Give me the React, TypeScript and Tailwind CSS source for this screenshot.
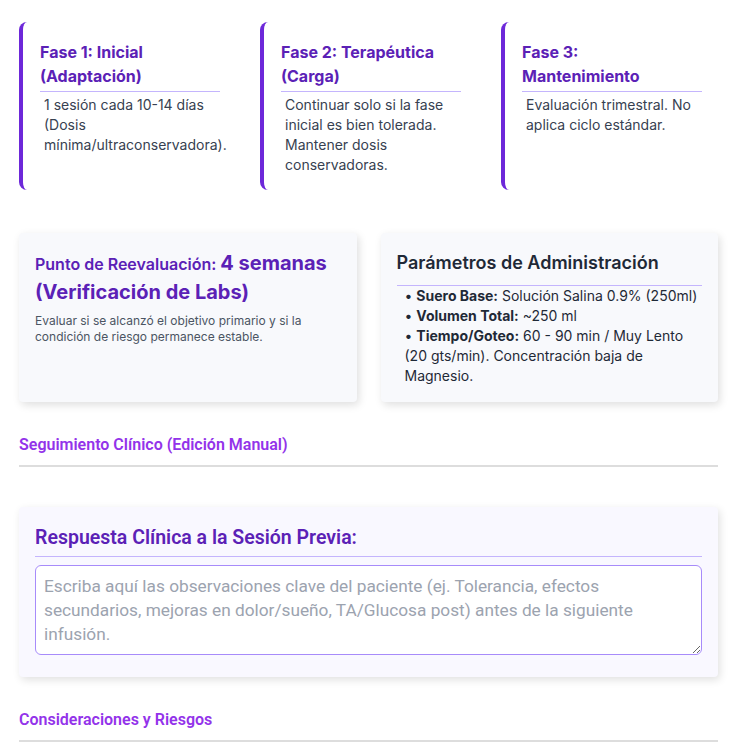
import React from 'react';

const phases: { title: React.ReactNode; body: string }[] = [
  {
    title: 'Fase 1: Inicial (Adaptación)',
    body: '1 sesión cada 10-14 días (Dosis mínima/ultraconservadora).',
  },
  {
    title: 'Fase 2: Terapéutica (Carga)',
    body: 'Continuar solo si la fase inicial es bien tolerada. Mantener dosis conservadoras.',
  },
  {
    title: (
      <>
        Fase 3:
        <br />
        Mantenimiento
      </>
    ),
    body: 'Evaluación trimestral. No aplica ciclo estándar.',
  },
];

const params = [
  { label: 'Suero Base:', value: 'Solución Salina 0.9% (250ml)' },
  { label: 'Volumen Total:', value: '~250 ml' },
  { label: 'Tiempo/Goteo:', value: '60 - 90 min / Muy Lento (20 gts/min). Concentración baja de Magnesio.' },
];

const SectionHeading = ({ children }: { children: React.ReactNode }) => (
  <h2 className="font-['Roboto',sans-serif] text-[16px] leading-6 font-semibold text-[#9333ea] pb-2 border-b-2 border-[#dddddd]">
    {children}
  </h2>
);

export default function App() {
  return (
    <div className="min-h-screen bg-white font-['Inter',sans-serif] pl-[19px] pr-[17px] pt-[22px] pb-4">
      {/* Phases */}
      <div className="grid grid-cols-3 gap-6">
        {phases.map((p, i) => (
          <div
            key={i}
            className="border-l-4 border-[#6d28d9] rounded-l-lg pl-[17px] pr-4 pt-[18px] pb-[15px]"
          >
            <h3 className="text-[16px] leading-6 font-bold text-[#5b21b6] pb-[3px] border-b border-[#c4b5fd]">
              {p.title}
            </h3>
            <p className="mt-[3px] pl-1 text-[14px] leading-5 text-[#374151]">{p.body}</p>
          </div>
        ))}
      </div>

      {/* Reevaluation + params */}
      <div className="grid grid-cols-2 gap-6 mt-[43px]">
        <div className="bg-[#f8f9fc] rounded-sm shadow-[2px_3px_8px_rgba(0,0,0,0.13)] px-4 pt-4 pb-4">
          <h3 className="text-[20px] leading-7 font-bold text-[#5b21b6]">
            <span className="text-[16px] font-semibold">Punto de Reevaluación: </span>
            4 semanas (Verificación de Labs)
          </h3>
          <p className="mt-[7px] text-[12px] leading-4 text-[#4b5563]">
            Evaluar si se alcanzó el objetivo primario y si la condición de riesgo permanece estable.
          </p>
        </div>
        <div className="bg-[#f8f9fc] rounded-sm shadow-[2px_3px_8px_rgba(0,0,0,0.13)] px-4 pt-4 pb-4">
          <h3 className="text-[18px] leading-7 font-semibold text-[#1f2937] pb-2 border-b border-[#c4b5fd]">
            Parámetros de Administración
          </h3>
          <ul className="pl-2 text-[14px] leading-5 text-[#1f2937]">
            {params.map((it) => (
              <li key={it.label}>
                • <strong className="font-bold">{it.label}</strong> {it.value}
              </li>
            ))}
          </ul>
        </div>
      </div>

      <div className="mt-[31px]">
        <SectionHeading>Seguimiento Clínico (Edición Manual)</SectionHeading>
      </div>

      <div className="mt-10 bg-[#f9f8ff] rounded-sm shadow-[2px_3px_8px_rgba(0,0,0,0.12)] px-4 pt-[17px] pb-[22px]">
        <h3 className="font-['Roboto',sans-serif] text-[19.5px] leading-7 font-semibold text-[#5b21b6] pb-1 border-b border-[#c4b5fd]">
          Respuesta Clínica a la Sesión Previa:
        </h3>
        <textarea
          rows={3}
          placeholder={
            'Escriba aquí las observaciones clave del paciente (ej. Tolerancia, efectos\nsecundarios, mejoras en dolor/sueño, TA/Glucosa post) antes de la siguiente\ninfusión.'
          }
          className="mt-2 block w-full h-[90px] bg-white border border-[#a78bfa] rounded-md px-2 py-2 font-['Roboto',sans-serif] text-[17.25px] leading-6 text-[#374151] placeholder:text-[#9ca3af] outline-none"
        />
      </div>

      <div className="mt-[31px]">
        <SectionHeading>Consideraciones y Riesgos</SectionHeading>
      </div>
    </div>
  );
}
